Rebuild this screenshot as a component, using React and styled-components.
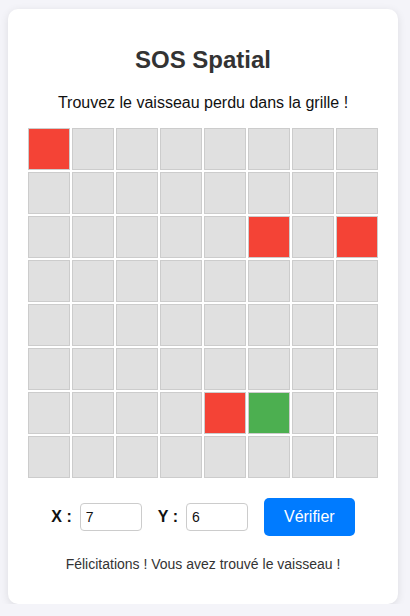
import React, { useState } from "react";
import styled, { createGlobalStyle } from "styled-components";

const GlobalStyle = createGlobalStyle`
  html, body {
    margin: 0;
    background: #f4f4f9;
    font-family: "Liberation Sans", Arial, sans-serif;
  }
  body {
    padding: 9px 0 0 8px;
  }
`;

const Card = styled.div`
  width: 390px;
  box-sizing: border-box;
  background: #fff;
  border-radius: 10px;
  box-shadow: 0 2px 8px rgba(0, 0, 0, 0.1);
  padding: 21px 20px 20px;
  display: flex;
  flex-direction: column;
  align-items: center;
`;

const Title = styled.h1`
  margin: 16px 0 0;
  font-size: 24px;
  font-weight: bold;
  color: #333;
`;

const Intro = styled.p`
  margin: 20px 0 16px;
  font-size: 16px;
  color: #111;
`;

const Grid = styled.div`
  display: grid;
  grid-template-columns: repeat(8, 42px);
  grid-auto-rows: 42px;
  gap: 2px;
`;

const Cell = styled.div`
  box-sizing: border-box;
  border: 1px solid #ccc;
  background: ${(p) =>
    p.$state === "miss" ? "#f44336" : p.$state === "hit" ? "#4caf50" : "#e0e0e0"};
`;

const Controls = styled.div`
  display: flex;
  align-items: center;
  justify-content: center;
  gap: 16px;
  margin-top: 20px;
`;

const Field = styled.label`
  display: flex;
  align-items: center;
  gap: 8px;
  font-size: 16px;
  font-weight: bold;
  color: #111;
`;

const Input = styled.input`
  width: 50px;
  padding: 5px;
  font-size: 14px;
  font-family: inherit;
  font-weight: normal;
  border: 1px solid #ccc;
  border-radius: 4px;
  color: #111;
`;

const Button = styled.button`
  padding: 10px 20px;
  border: none;
  border-radius: 5px;
  background: #007bff;
  color: #fff;
  font-size: 16px;
  font-family: inherit;
  cursor: pointer;
`;

const Message = styled.p`
  margin: 20px 0 12px;
  font-size: 14px;
  color: #333;
`;

const misses = ["0-0", "5-2", "7-2", "4-6"];
const hit = "5-6";

export default function App() {
  const [x, setX] = useState("7");
  const [y, setY] = useState("6");

  const cells = [];
  for (let r = 0; r < 8; r++) {
    for (let c = 0; c < 8; c++) {
      const key = `${c}-${r}`;
      const state = key === hit ? "hit" : misses.includes(key) ? "miss" : "empty";
      cells.push(<Cell key={key} $state={state} />);
    }
  }

  return (
    <>
      <GlobalStyle />
      <Card>
        <Title>SOS Spatial</Title>
        <Intro>Trouvez le vaisseau perdu dans la grille !</Intro>
        <Grid>{cells}</Grid>
        <Controls>
          <Field>
            X :
            <Input value={x} onChange={(e) => setX(e.target.value)} />
          </Field>
          <Field>
            Y :
            <Input value={y} onChange={(e) => setY(e.target.value)} />
          </Field>
          <Button>Vérifier</Button>
        </Controls>
        <Message>Félicitations ! Vous avez trouvé le vaisseau !</Message>
      </Card>
    </>
  );
}
